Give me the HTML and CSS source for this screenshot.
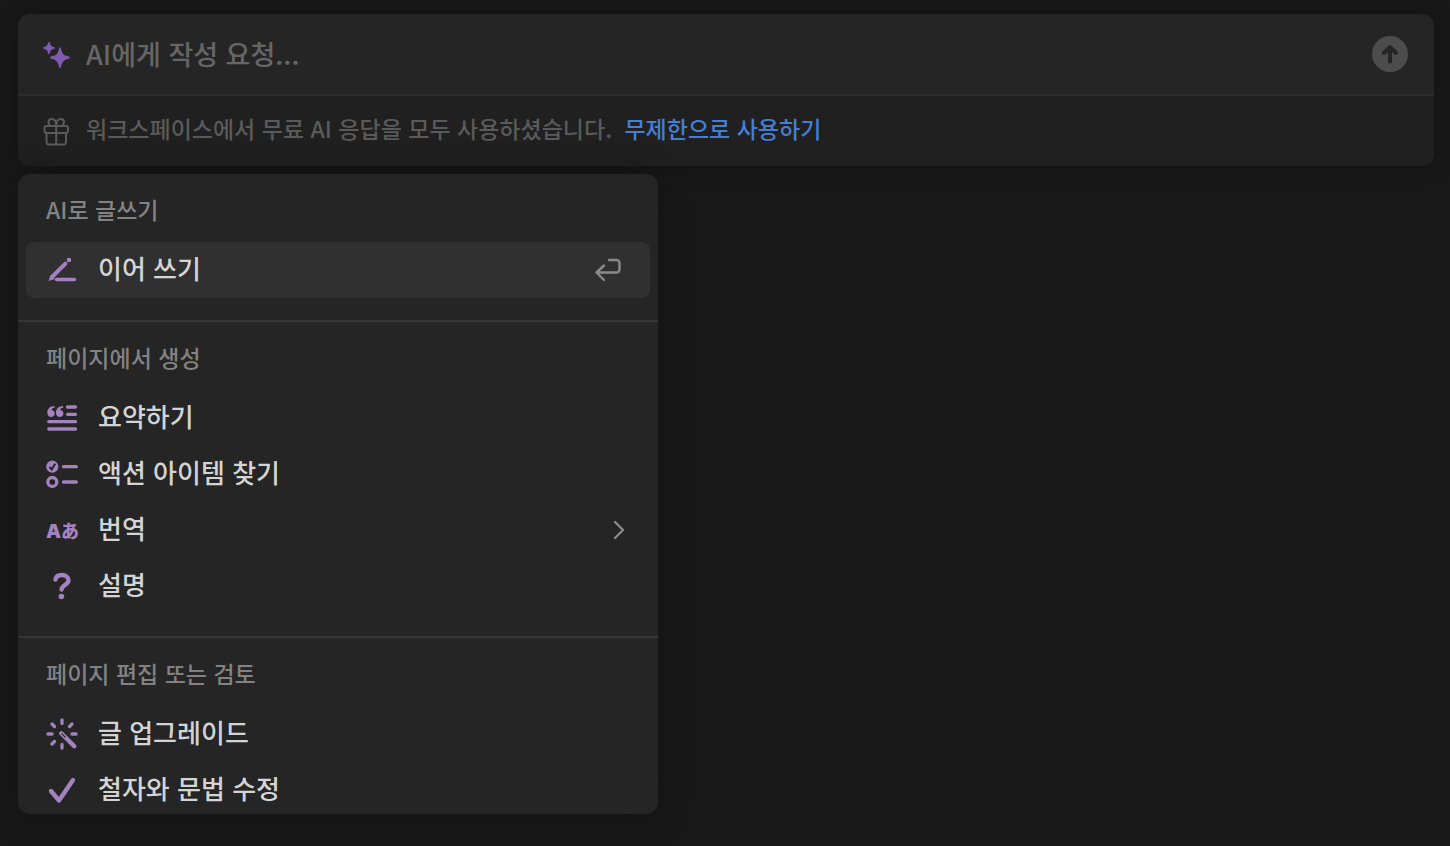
FILE: index.html
```html
<!DOCTYPE html>
<html lang="ko">
<head>
  <meta charset="utf-8">
  <meta name="viewport" content="width=device-width, initial-scale=1.0">
  <title>AI</title>
  <link rel="stylesheet" href="styles.css">
</head>
<body>

  <form class="composer">
    <div class="prompt-row">
      <svg class="sparkles" viewBox="0 0 28 28" aria-hidden="true">
        <path d="M18 7.500c.6 0 .8.500 1 1.200 1.300 5.300 2.500 6.500 7.800 7.900 1.600.4 1.600 1.800 0 2.200-5.300 1.400-6.500 2.600-7.800 7.900-.4 1.600-1.600 1.600-2 0-1.300-5.300-2.500-6.500-7.800-7.900-1.600-.4-1.600-1.800 0-2.200 5.300-1.400 6.500-2.600 7.800-7.900.2-.7.4-1.200 1-1.200z"/>
        <path d="M7 1.800c.5 0 .6.400.7.800.8 3 1.700 3.900 4.700 4.700 1 .3 1 1.100 0 1.400-3 .8-3.900 1.700-4.700 4.700-.3 1-1.100 1-1.400 0-.8-3-1.700-3.900-4.700-4.700-1-.3-1-1.100 0-1.400 3-.8 3.900-1.700 4.700-4.700.1-.4.200-.8.700-.8z"/>
      </svg>
      <input class="prompt" type="text" placeholder="AI에게 작성 요청..." aria-label="AI에게 작성 요청">
      <button class="send" type="button" aria-label="보내기">
        <svg viewBox="0 0 36 36"><path d="M18 25.500V11M12 17l6-6 6 6"/></svg>
      </button>
    </div>
    <div class="notice-row">
      <svg class="gift" viewBox="0 0 28 28" aria-hidden="true">
        <rect x="2.500" y="9" width="23.500" height="7" rx="2"/>
        <path d="M4.500 16v9a2.500 2.500 0 0 0 2.500 2.500h14.500a2.500 2.500 0 0 0 2.500-2.500v-9M14.200 9v18.500M14.200 9C14.200 4.500 12.500 2 9.800 2 7.800 2 6.500 3.300 6.500 5c0 2 1.500 4 3 4M14.200 9C14.200 4.500 16 2 18.700 2 20.700 2 22 3.300 22 5c0 2-1.500 4-3 4"/>
      </svg>
      <p class="label">워크스페이스에서 무료 AI 응답을 모두 사용하셨습니다. <a href="#">무제한으로 사용하기</a></p>
    </div>
  </form>

  <div class="menu">
    <section>
      <h2>AI로 글쓰기</h2>
      <button class="item selected" type="button">
        <svg class="icon" viewBox="0 0 32 32">
          <path class="line pen" d="M6 23L19.400 9.600"/>
          <path class="line" d="M10.500 25.500H28.500"/>
          <path d="M2.500 27l2-6 4.500 4z"/>
          <circle cx="23" cy="6" r="2.300"/>
        </svg>
        <span class="label">이어 쓰기</span>
        <svg class="enter" viewBox="0 0 36 28"><path d="M19 4h7.500a3 3 0 0 1 3 3v6.500a3 3 0 0 1-3 3H6.500M14 9.500l-7.500 7L14 24"/></svg>
      </button>
    </section>

    <section>
      <h2>페이지에서 생성</h2>
      <button class="item" type="button">
        <svg class="icon" viewBox="0 0 32 32">
          <path class="line" d="M21.500 5h8M21.500 12.300h8M2.800 19.700h26.700M2.800 27h26.700"/>
          <path d="M8.500 4C4 4 1.300 6.800 1.300 10.800c0 2.400 1.500 4.200 3.700 4.200 2.100 0 3.700-1.500 3.700-3.500S7.200 8 5.300 8c.5-1.400 1.600-2.200 3.200-2.600z"/>
          <path d="M17.200 4C12.700 4 10 6.800 10 10.800c0 2.400 1.500 4.200 3.700 4.200 2.100 0 3.700-1.500 3.700-3.500S15.900 8 14 8c.5-1.400 1.600-2.200 3.200-2.600z"/>
        </svg>
        <span class="label">요약하기</span>
      </button>
      <button class="item" type="button">
        <svg class="icon" viewBox="0 0 32 32">
          <circle cx="6.300" cy="8.700" r="6.100"/>
          <path class="tick" d="M3.500 9l2.200 2.400L9.200 5.800"/>
          <circle class="line" cx="6.300" cy="24" r="4.500"/>
          <path class="line" d="M17.500 8.700h12.800M17.500 24h12.800"/>
        </svg>
        <span class="label">액션 아이템 찾기</span>
      </button>
      <button class="item" type="button">
        <span class="icon letters" aria-hidden="true"><b>A</b><b lang="ja">あ</b></span>
        <span class="label">번역</span>
        <svg class="chevron" viewBox="0 0 14 20"><path d="M3 2l8 8-8 8"/></svg>
      </button>
      <button class="item" type="button">
        <svg class="icon" viewBox="0 0 32 32">
          <path class="line thick" d="M9.500 9.500C10 6.500 12.500 5 15.800 5c3.700 0 6.700 2 6.700 5.300 0 4.700-6.900 4.700-6.900 9.200"/>
          <circle cx="15.400" cy="26.500" r="2.800"/>
        </svg>
        <span class="label">설명</span>
      </button>
    </section>

    <section>
      <h2>페이지 편집 또는 검토</h2>
      <button class="item" type="button">
        <svg class="icon" viewBox="0 0 32 32">
          <path class="line" d="M16 2v3.500M16 26.500V30M2 16h4M26 16h4M6 6l2.500 2.500M26 6l-2.500 2.500M6 26l2.500-2.500"/>
          <path class="line thick" d="M15.300 15.300l13 13"/>
          <path class="slit" d="M15.400 15.400l4 4"/>
        </svg>
        <span class="label">글 업그레이드</span>
      </button>
      <button class="item" type="button">
        <svg class="icon" viewBox="0 0 32 32"><path class="line thick" d="M5 17l8 9.500L27 6"/></svg>
        <span class="label">철자와 문법 수정</span>
      </button>
    </section>
  </div>

</body>
</html>
```
FILE: styles.css
```css
* {
  box-sizing: border-box;
}

body {
  margin: 0;
  padding: 14px 16px 32px 18px;
  background: #191919;
  color: #d4d4d4;
  font-family: "Noto Sans CJK KR", sans-serif;
  font-weight: 500;
}

svg {
  flex: none;
  overflow: visible;
}

button {
  border: 0;
  color: inherit;
  font: inherit;
  cursor: pointer;
}

.composer {
  border-radius: 12px;
  background: #202020;
  box-shadow: 0 0 24px rgba(0, 0, 0, 0.3);
  overflow: hidden;
}

.prompt-row,
.notice-row {
  display: flex;
  align-items: center;
  gap: 16px;
  padding: 0 26px 0 24px;
}

.prompt-row {
  height: 82px;
  background: #252525;
  border-bottom: 2px solid #2d2d2d;
}

.sparkles {
  width: 28px;
  height: 28px;
  fill: #7f5ab0;
}

.prompt {
  flex: 1;
  min-width: 0;
  padding: 0;
  border: 0;
  outline: 0;
  background: none;
  color: #d4d4d4;
  font: 500 27px/40px "Noto Sans CJK KR", sans-serif;
}

.prompt::placeholder {
  color: #666;
  opacity: 1;
}

.send {
  width: 36px;
  height: 36px;
  padding: 0;
  border-radius: 50%;
  background: #4c4c4c;
}

.send svg {
  display: block;
  fill: none;
  stroke: #252525;
  stroke-width: 4;
  stroke-linecap: round;
  stroke-linejoin: round;
}

.notice-row {
  height: 70px;
  color: #5a5a5a;
  font-size: 23px;
}

.notice-row p {
  margin: 0;
}

.gift {
  width: 28px;
  height: 28px;
  fill: none;
  stroke: #5a5a5a;
  stroke-width: 2;
}

.notice-row a {
  margin-left: 6px;
  color: #447fd6;
  text-decoration: none;
}

/* the Korean glyphs sit low in their line box */
.label {
  padding-bottom: 6px;
}

.menu {
  max-width: 640px;
  max-height: 640px;
  margin-top: 8px;
  border-radius: 12px;
  background: #252525;
  box-shadow: 0 4px 36px rgba(0, 0, 0, 0.3);
  overflow: hidden;
  position: relative;
}

.menu section {
  padding: 8px 8px 22px;
}

.menu section + section {
  border-top: 2px solid #373737;
}

.menu h2 {
  margin: 0;
  padding: 0 20px 6px;
  color: #828282;
  font-size: 23px;
  font-weight: 500;
  line-height: 54px;
}

.item {
  display: flex;
  align-items: center;
  gap: 20px;
  width: 100%;
  height: 56px;
  padding: 0 24px 0 20px;
  border-radius: 8px;
  background: none;
  font-size: 26px;
  text-align: left;
}

.item.selected,
.item:hover {
  background: #303030;
}

.icon {
  width: 32px;
  height: 32px;
  fill: #a382bf;
}

.icon .line {
  fill: none;
  stroke: #a382bf;
  stroke-width: 3.3;
  stroke-linecap: round;
  stroke-linejoin: round;
}

.icon .pen {
  stroke-width: 4;
}

.icon .thick {
  stroke-width: 4.4;
}

.icon .tick,
.icon .slit {
  fill: none;
  stroke: #252525;
  stroke-width: 2;
}

.icon .slit {
  stroke-width: 1.2;
}

.letters {
  display: flex;
  flex: none;
  align-items: baseline;
  color: #a382bf;
  font-family: Inter, sans-serif;
  font-size: 19px;
  line-height: 32px;
}

.letters b {
  font-weight: 900;
}

.letters [lang="ja"] {
  font-family: "Noto Sans CJK JP", sans-serif;
  font-size: 18px;
}

.enter,
.chevron {
  margin-left: auto;
  fill: none;
  stroke: #8a8a8a;
  stroke-width: 2.4;
  stroke-linecap: round;
  stroke-linejoin: round;
}

.enter {
  width: 36px;
  height: 28px;
}

.chevron {
  width: 14px;
  height: 20px;
}
```
